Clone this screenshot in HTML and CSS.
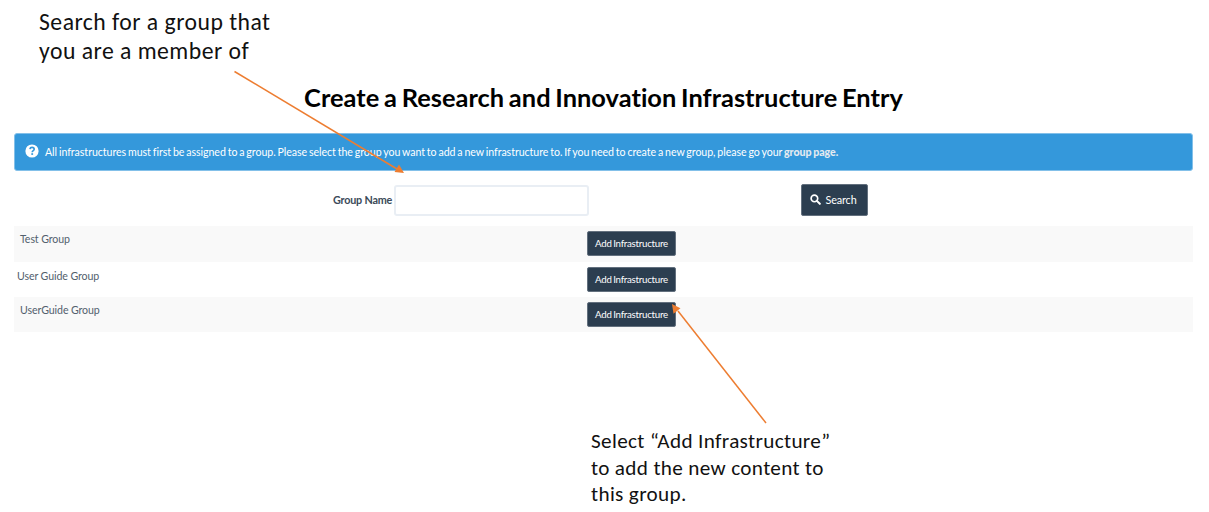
FILE: index.html
```html
<!DOCTYPE html>
<html lang="en">
<head>
<meta charset="utf-8">
<title>Create a Research and Innovation Infrastructure Entry</title>
<link rel="stylesheet" href="styles.css">
</head>
<body>
<main class="page">
  <p class="note note-search">Search for a group that<br>you are a member of</p>
  <h1 class="title">Create a Research and Innovation Infrastructure Entry</h1>
  <div class="alert">
    <svg class="help-icon" viewBox="0 0 14 14"><circle cx="7" cy="7" r="6.600" fill="#fff"/><path d="M4.900 5.200C5.100 3.900 6 3.400 7 3.400C8.300 3.400 9.200 4.100 9.200 5.200C9.200 6.600 7.200 6.500 7.200 8.200" fill="none" stroke="#3498db" stroke-width="1.600"/><rect x="6.300" y="9.200" width="1.800" height="1.700" fill="#3498db"/></svg>
    <span class="alert-text">All infrastructures must first be assigned to a group. Please select the group you want to add a new infrastructure to. If you need to create a new group, please go your <a class="alert-link">group page.</a></span>
  </div>
  <form class="search-form">
    <label class="label" for="group">Group Name</label>
    <input class="input" id="group" type="text">
    <button class="button search-button" type="button"><svg class="search-icon" viewBox="0 0 12 12"><circle cx="4.800" cy="4.800" r="3.600" fill="none" stroke="#fff" stroke-width="1.800"/><path d="M7.500 7.500L10.700 10.700" stroke="#fff" stroke-width="2.200" stroke-linecap="round"/></svg><span>Search</span></button>
  </form>
  <div class="groups">
    <div class="row shaded"><span class="group-name">Test Group</span><button class="button add-button" type="button">Add Infrastructure</button></div>
    <div class="row plain"><span class="group-name wide">User Guide Group</span><button class="button add-button" type="button">Add Infrastructure</button></div>
    <div class="row shaded"><span class="group-name">UserGuide Group</span><button class="button add-button" type="button">Add Infrastructure</button></div>
  </div>
  <p class="note note-add">Select “Add Infrastructure”<br>to add the new content to<br>this group.</p>
  <svg class="arrows" viewBox="0 0 1209 512"><g stroke="#ed7d31" stroke-width="1.500"><path d="M234.500 71.500L397 169"/><path d="M766 423L678 311"/></g><path d="M404 173L394.500 172L399 164.500ZM672 304L680.500 308.300L673.500 313.800Z" fill="#ed7d31"/></svg>
</main>
</body>
</html>
```

FILE: styles.css
```css
* { box-sizing: border-box; }
body { margin: 0; background: #fff; font-family: Lato, sans-serif; font-variant-ligatures: none; }
.page { position: relative; width: 1209px; height: 512px; overflow: hidden; padding: 7px 16px 0 14px; }
.note { margin: 0; color: #111; font-family: Carlito, "Noto Sans", sans-serif; white-space: nowrap; }
.note-search { height: 76px; padding-left: 25px; font-size: 23.700px; line-height: 29px; letter-spacing: 0.480px; }
.title { height: 28px; margin: 0 0 22px; color: #000; font-size: 25.400px; font-weight: 700; line-height: 28px; letter-spacing: 0.030px; word-spacing: -1.500px; text-align: center; white-space: nowrap; }
.alert { display: flex; align-items: center; height: 38px; padding: 0 10px; border: 1px solid #83c0e9; border-radius: 3px; background: #3498db; color: #fff; font-size: 10.600px; letter-spacing: -0.040px; word-spacing: -0.800px; }
.help-icon { width: 14px; height: 14px; margin: 0 6px 3px 0; }
.alert-text { white-space: nowrap; }
.alert-link { color: #e3eaf0; font-weight: 900; }
.search-form { display: flex; align-items: center; height: 32px; margin-top: 13px; padding-left: 319px; }
.label { width: 61px; color: #3b4a59; font-size: 10.800px; font-weight: 700; letter-spacing: -0.200px; padding-bottom: 1px; white-space: nowrap; }
.input { width: 195px; height: 31px; border: 2px solid #e9eef4; border-radius: 3px; background: #fff; }
.button { display: flex; align-items: center; justify-content: center; padding: 0 0 1px; border: 1px solid #63707e; border-radius: 2px; background: #2c3e50; color: #fff; font-family: Lato, sans-serif; font-variant-ligatures: none; white-space: nowrap; }
.search-button { width: 67px; height: 32px; margin-left: 212px; padding-right: 2px; gap: 4px; font-size: 10.800px; letter-spacing: -0.100px; }
.search-icon { width: 11px; height: 11px; }
.groups { margin-top: 10px; }
.row { display: flex; align-items: flex-start; height: 35px; padding-top: 5px; }
.shaded { height: 35.500px; padding-left: 6px; background: #f9f9f9; }
.plain { padding-left: 3px; }
.group-name { width: 567px; color: #52606d; font-size: 10.600px; line-height: 16px; letter-spacing: -0.090px; white-space: nowrap; }
.wide { width: 570px; padding-top: 1px; }
.add-button { width: 89px; height: 25px; font-size: 9.700px; letter-spacing: -0.240px; word-spacing: -0.700px; }
.note-add { margin-top: 96px; padding-left: 577px; font-size: 21.200px; line-height: 26.500px; letter-spacing: 0.340px; }
.arrows { position: absolute; inset: 0; width: 1209px; height: 512px; pointer-events: none; }
```
